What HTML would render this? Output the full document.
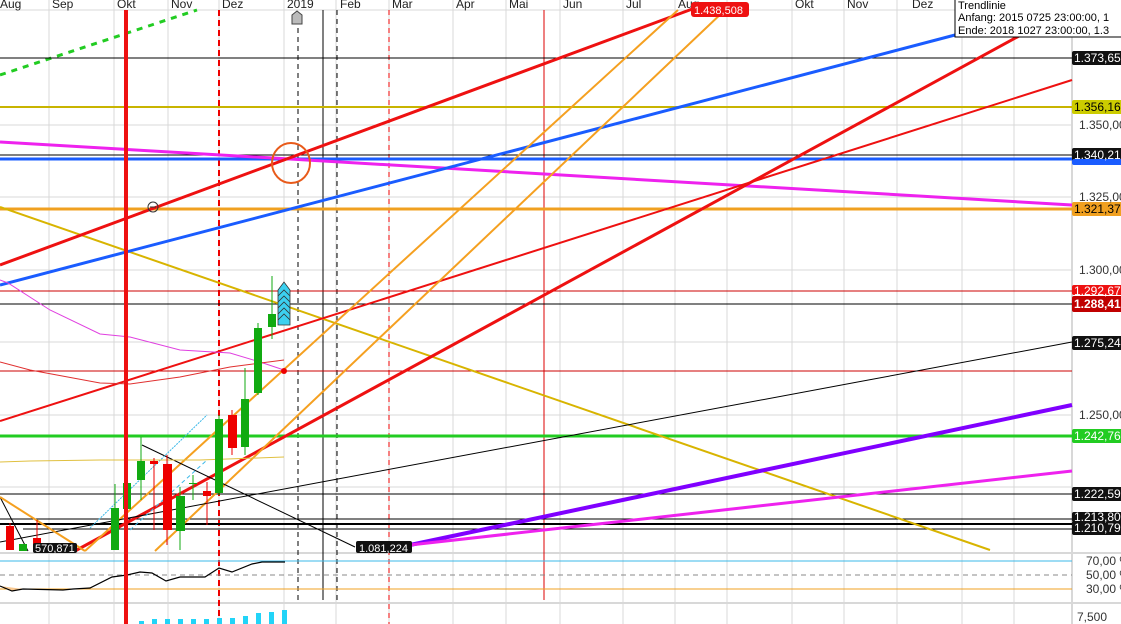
<!DOCTYPE html>
<html><head><meta charset="utf-8"><style>
html,body{margin:0;padding:0;background:#fff;}
svg{display:block;font-family:"Liberation Sans",sans-serif;}
</style></head><body>
<svg width="1121" height="624" viewBox="0 0 1121 624" xmlns="http://www.w3.org/2000/svg">
<rect width="1121" height="624" fill="#fff"/>
<g stroke="#d8d8d8" stroke-width="1">
<line x1="49" y1="0" x2="49" y2="624"/><line x1="114" y1="0" x2="114" y2="624"/><line x1="168" y1="0" x2="168" y2="624"/>
<line x1="219" y1="0" x2="219" y2="624"/><line x1="284" y1="0" x2="284" y2="624"/><line x1="336" y1="0" x2="336" y2="624"/>
<line x1="389" y1="0" x2="389" y2="624"/><line x1="453" y1="0" x2="453" y2="624"/><line x1="506" y1="0" x2="506" y2="624"/>
<line x1="560" y1="0" x2="560" y2="624"/><line x1="623" y1="0" x2="623" y2="624"/><line x1="675" y1="0" x2="675" y2="624"/>
<line x1="727" y1="0" x2="727" y2="624"/><line x1="792" y1="0" x2="792" y2="624"/><line x1="844" y1="0" x2="844" y2="624"/>
<line x1="897" y1="0" x2="897" y2="624"/><line x1="962" y1="0" x2="962" y2="624"/><line x1="1014" y1="0" x2="1014" y2="624"/>
</g>
<g stroke="#d8d8d8" stroke-width="1">
<line x1="0" y1="10" x2="1072" y2="10"/>
<line x1="0" y1="125" x2="1072" y2="125"/><line x1="0" y1="197" x2="1072" y2="197"/><line x1="0" y1="270" x2="1072" y2="270"/>
<line x1="0" y1="342" x2="1072" y2="342"/><line x1="0" y1="415" x2="1072" y2="415"/><line x1="0" y1="487" x2="1072" y2="487"/>
<line x1="0" y1="553" x2="1121" y2="553" stroke-width="2"/><line x1="0" y1="603" x2="1121" y2="603" stroke-width="2"/>
<line x1="1072" y1="0" x2="1072" y2="624" stroke-width="2"/>
</g>
<g font-size="12" fill="#222">
<text x="0" y="8">Aug</text><text x="52" y="8">Sep</text><text x="117" y="8">Okt</text><text x="171" y="8">Nov</text>
<text x="222" y="8">Dez</text><text x="287" y="8">2019</text><text x="340" y="8">Feb</text><text x="392" y="8">Mar</text>
<text x="456" y="8">Apr</text><text x="509" y="8">Mai</text><text x="563" y="8">Jun</text><text x="626" y="8">Jul</text>
<text x="678" y="8">Aug</text><text x="795" y="8">Okt</text><text x="847" y="8">Nov</text><text x="912" y="8">Dez</text>
<text x="1018" y="8" fill="#bbb">Feb</text>
</g>
<line x1="298" y1="28" x2="298" y2="600" stroke="#000" stroke-dasharray="5,4"/>
<line x1="323" y1="10" x2="323" y2="600" stroke="#000"/>
<line x1="337" y1="10" x2="337" y2="600" stroke="#000" stroke-dasharray="5,4"/>
<line x1="389" y1="10" x2="389" y2="624" stroke="#e00" stroke-dasharray="5,4"/>
<line x1="544" y1="10" x2="544" y2="600" stroke="#d00"/>
<line x1="219" y1="10" x2="219" y2="624" stroke="#e00" stroke-width="2" stroke-dasharray="6,4"/>
<path d="M292,24 L292,15 L297,11 L302,15 L302,24 Z" fill="#bbb" stroke="#444"/>
<line x1="0" y1="75" x2="197" y2="10" stroke="#22cc22" stroke-width="3" stroke-dasharray="6,6"/>
<line x1="0" y1="58" x2="1072" y2="58" stroke="#000"/>
<line x1="0" y1="107" x2="1072" y2="107" stroke="#c8b400" stroke-width="2"/>
<line x1="0" y1="155" x2="1072" y2="155" stroke="#000"/>
<line x1="0" y1="159" x2="1072" y2="159" stroke="#1a5cff" stroke-width="3"/>
<line x1="0" y1="209" x2="1072" y2="209" stroke="#f0a020" stroke-width="3"/>
<line x1="0" y1="291" x2="1072" y2="291" stroke="#c00" />
<line x1="0" y1="304" x2="1072" y2="304" stroke="#000"/>
<line x1="0" y1="371" x2="1072" y2="371" stroke="#c00"/>
<line x1="0" y1="436" x2="1072" y2="436" stroke="#22cc22" stroke-width="3"/>
<line x1="0" y1="494" x2="1072" y2="494" stroke="#000"/>
<line x1="0" y1="519" x2="1072" y2="519" stroke="#000"/>
<line x1="0" y1="524" x2="1072" y2="524" stroke="#000" stroke-width="2"/>
<line x1="23" y1="529" x2="1072" y2="529" stroke="#000"/>
<line x1="0" y1="142" x2="1072" y2="205" stroke="#ee22ee" stroke-width="3"/>
<line x1="0" y1="207" x2="990" y2="550" stroke="#d8b400" stroke-width="2"/>
<line x1="0" y1="285" x2="955" y2="35" stroke="#1a5cff" stroke-width="3"/>
<line x1="0" y1="265" x2="695" y2="8" stroke="#ee1111" stroke-width="3"/>
<line x1="0" y1="421" x2="1072" y2="80" stroke="#ee1111" stroke-width="2"/>
<line x1="75" y1="551" x2="1030" y2="30" stroke="#ee1111" stroke-width="3"/>
<line x1="85" y1="551" x2="678" y2="10" stroke="#f5a020" stroke-width="2"/>
<line x1="155" y1="551" x2="725" y2="10" stroke="#f5a020" stroke-width="2"/>
<line x1="0" y1="542" x2="1072" y2="342" stroke="#000" stroke-width="1"/>
<line x1="410" y1="545" x2="1072" y2="405" stroke="#8000ff" stroke-width="4"/>
<line x1="410" y1="545" x2="1072" y2="471" stroke="#ee22ee" stroke-width="3"/>
<line x1="142" y1="445" x2="355" y2="547" stroke="#000" stroke-width="1"/>
<line x1="0" y1="497" x2="28" y2="551" stroke="#000"/>
<line x1="0" y1="497" x2="85" y2="551" stroke="#f5a020" stroke-width="2"/>
<line x1="90" y1="528" x2="207" y2="415" stroke="#3bb8e8" stroke-dasharray="2,1"/>
<line x1="130" y1="530" x2="207" y2="460" stroke="#3bb8e8" stroke-dasharray="4,3"/>
<polyline points="0,280 8,283 50,310 100,334 130,337 180,350 230,353 260,362 284,370" fill="none" stroke="#e040e0"/>
<polyline points="0,362 30,370 100,383 130,384 180,377 230,367 284,360" fill="none" stroke="#e03030"/>
<polyline points="0,462 30,461 100,460 200,460 284,457" fill="none" stroke="#e0c040"/>
<circle cx="284" cy="371" r="3" fill="#e00"/>
<g stroke-width="1">
<line x1="10" y1="523" x2="10" y2="550" stroke="#e00"/><rect x="6" y="526" width="8" height="24" fill="#e00"/>
<rect x="19" y="544" width="8" height="7" fill="#1a1"/>
<line x1="37" y1="520" x2="37" y2="550" stroke="#e00"/><rect x="33" y="538" width="8" height="13" fill="#e00"/>
<line x1="115" y1="484" x2="115" y2="550" stroke="#1a1"/><rect x="111" y="508" width="8" height="42" fill="#1a1"/>
<line x1="127" y1="470" x2="127" y2="520" stroke="#1a1"/><rect x="123" y="483" width="8" height="26" fill="#1a1"/>
<line x1="141" y1="437" x2="141" y2="500" stroke="#1a1"/><rect x="137" y="461" width="8" height="19" fill="#1a1"/>
<line x1="154" y1="458" x2="154" y2="530" stroke="#e00"/><rect x="150" y="461" width="8" height="3" fill="#e00"/>
<line x1="167" y1="455" x2="167" y2="545" stroke="#e00"/><rect x="163" y="464" width="9" height="66" fill="#e00"/>
<line x1="180" y1="487" x2="180" y2="550" stroke="#1a1"/><rect x="176" y="496" width="9" height="35" fill="#1a1"/>
<line x1="193" y1="475" x2="193" y2="500" stroke="#1a1"/><rect x="189" y="483" width="8" height="1" fill="#1a1"/>
<line x1="207" y1="482" x2="207" y2="525" stroke="#e00"/><rect x="203" y="491" width="8" height="5" fill="#e00"/>
<line x1="219" y1="415" x2="219" y2="495" stroke="#1a1"/><rect x="215" y="419" width="8" height="74" fill="#1a1"/>
<line x1="232" y1="410" x2="232" y2="455" stroke="#e00"/><rect x="228" y="415" width="9" height="33" fill="#e00"/>
<line x1="245" y1="368" x2="245" y2="455" stroke="#1a1"/><rect x="241" y="399" width="8" height="48" fill="#1a1"/>
<line x1="258" y1="323" x2="258" y2="395" stroke="#1a1"/><rect x="254" y="328" width="8" height="65" fill="#1a1"/>
<line x1="272" y1="276" x2="272" y2="339" stroke="#1a1"/><rect x="268" y="314" width="8" height="13" fill="#1a1"/>
</g>
<g fill="#3cd0f0" stroke="#333" stroke-width="0.8">
<path d="M278,325 L278,290 L284,282 L290,290 L290,325 Z"/>
<path d="M278,296 L284,290 L290,296 M278,302 L284,296 L290,302 M278,308 L284,302 L290,308 M278,314 L284,308 L290,314 M278,320 L284,314 L290,320" fill="none"/>
</g>
<ellipse cx="291" cy="163" rx="19" ry="20" fill="none" stroke="#e85a1a" stroke-width="2"/>
<circle cx="153" cy="207" r="5" fill="none" stroke="#333"/>
<line x1="150" y1="207" x2="156" y2="207" stroke="#333"/>
<rect x="33" y="543" width="44" height="10" rx="2" fill="#111"/><text x="35" y="552" font-size="11" fill="#fff">570,871</text>
<rect x="356" y="541" width="56" height="12" rx="2" fill="#111"/><text x="359" y="552" font-size="11" fill="#fff">1.081,224</text>
<rect x="691" y="2" width="58" height="15" rx="3" fill="#ee1111"/><text x="694" y="14" font-size="11" fill="#fff">1.438,508</text>
<rect x="955" y="-1" width="170" height="38" fill="#fff" stroke="#000"/>
<text x="958" y="9" font-size="11" fill="#000">Trendlinie</text>
<text x="958" y="21" font-size="11" fill="#000">Anfang: 2015 0725 23:00:00, 1</text>
<text x="958" y="34" font-size="11" fill="#000">Ende: 2018 1027 23:00:00, 1.3</text>
<line x1="0" y1="561" x2="1072" y2="561" stroke="#3bb8e8"/>
<line x1="0" y1="575" x2="1072" y2="575" stroke="#888" stroke-dasharray="5,4"/>
<line x1="0" y1="589" x2="1072" y2="589" stroke="#f0a020"/>
<path d="M0,586 L12,591 L23,589 Z" fill="#f8c890"/>
<polyline points="0,586 12,591 23,589 63,590 73,589 90,588 112,577 127,575 140,572 152,573 166,581 180,577 205,577 219,568 232,572 252,564 262,562 285,562" fill="none" stroke="#000" stroke-width="1.2"/>
<line x1="126" y1="10" x2="126" y2="624" stroke="#ee1111" stroke-width="4"/>
<g fill="#22d4f8">
<rect x="139" y="621" width="5" height="3"/><rect x="152" y="619" width="5" height="5"/><rect x="165" y="619" width="5" height="5"/>
<rect x="178" y="619" width="5" height="5"/><rect x="191" y="619" width="5" height="5"/><rect x="204" y="619" width="5" height="5"/>
<rect x="217" y="618" width="5" height="6"/><rect x="230" y="618" width="5" height="6"/><rect x="243" y="616" width="5" height="8"/>
<rect x="256" y="613" width="5" height="11"/><rect x="269" y="612" width="5" height="12"/><rect x="282" y="610" width="5" height="14"/>
</g>
<g font-size="12">
<g fill="#111">
<rect x="1072" y="51" width="52" height="14" rx="2"/>
<rect x="1072" y="148" width="52" height="14" rx="2"/>
<rect x="1072" y="336" width="52" height="14" rx="2"/>
<rect x="1072" y="487" width="52" height="14" rx="2"/>
<rect x="1072" y="512" width="52" height="10" rx="2"/>
<rect x="1072" y="521" width="52" height="14" rx="2"/>
</g>
<rect x="1072" y="159" width="52" height="6" rx="2" fill="#1a5cff"/>
<rect x="1072" y="100" width="52" height="14" rx="2" fill="#cccc00"/>
<rect x="1072" y="202" width="52" height="14" rx="2" fill="#f0a020"/>
<rect x="1072" y="285" width="52" height="10" rx="2" fill="#ee1111"/>
<rect x="1072" y="296" width="52" height="16" rx="2" fill="#c00000"/>
<rect x="1072" y="429" width="52" height="14" rx="2" fill="#22cc22"/>
<text x="1074" y="62" fill="#fff">1.373,65</text>
<text x="1074" y="111" fill="#000">1.356,16</text>
<text x="1079" y="129" fill="#333">1.350,00</text>
<text x="1074" y="159" fill="#fff">1.340,21</text>
<text x="1079" y="201" fill="#333">1.325,00</text>
<text x="1074" y="213" fill="#000">1.321,37</text>
<text x="1079" y="274" fill="#333">1.300,00</text>
<text x="1074" y="295" fill="#fff">1.292,67</text>
<text x="1074" y="308" fill="#fff" font-weight="bold">1.288,41</text>
<text x="1074" y="347" fill="#fff">1.275,24</text>
<text x="1079" y="419" fill="#333">1.250,00</text>
<text x="1074" y="440" fill="#fff">1.242,76</text>
<text x="1074" y="498" fill="#fff">1.222,59</text>
<text x="1074" y="521" fill="#fff">1.213,80</text>
<text x="1074" y="532" fill="#fff">1.210,79</text>
<text x="1086" y="565" fill="#333">70,00 %</text>
<text x="1086" y="579" fill="#333">50,00 %</text>
<text x="1086" y="593" fill="#333">30,00 %</text>
<text x="1077" y="621" fill="#333">7,500</text>
</g>
</svg>
</body></html>
